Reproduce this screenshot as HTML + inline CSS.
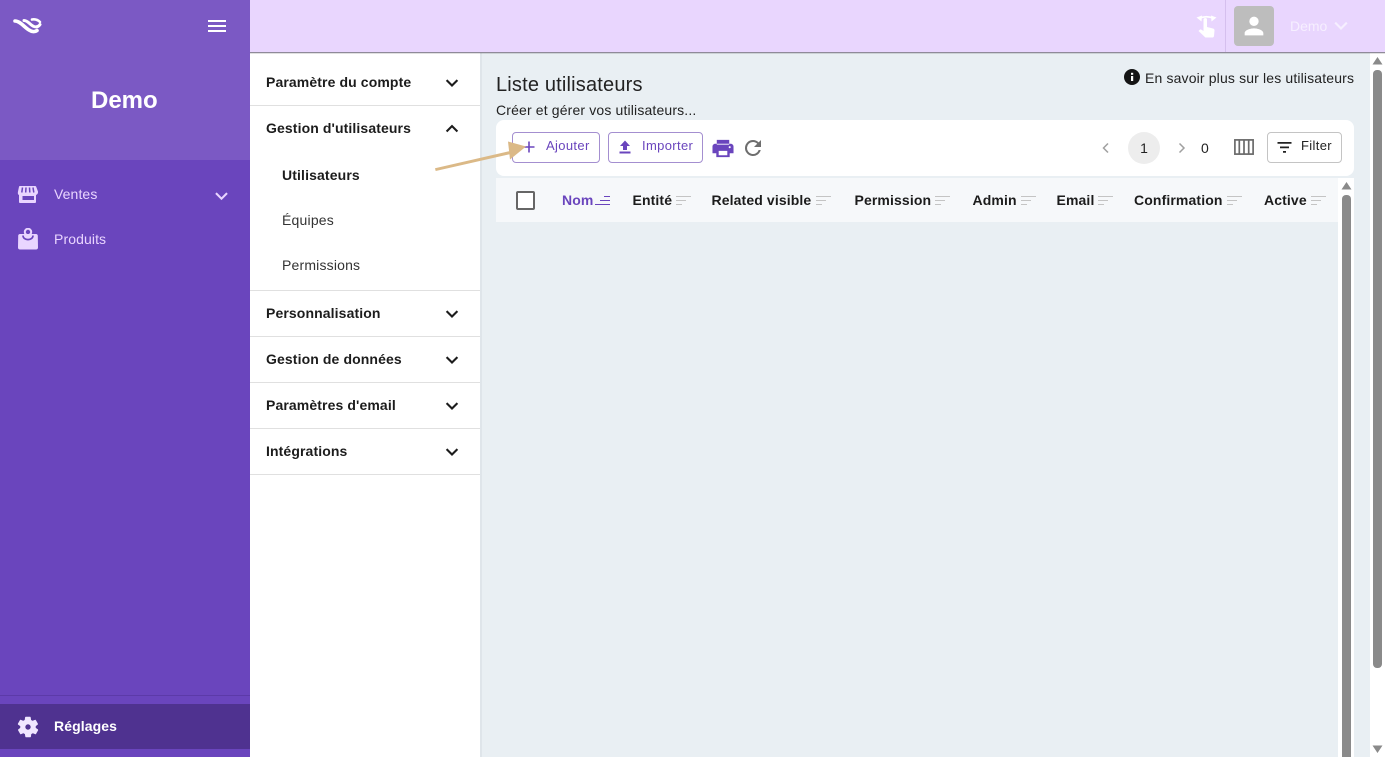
<!DOCTYPE html>
<html><head><meta charset="utf-8">
<style>
html,body{margin:0;padding:0;width:1385px;height:757px;overflow:hidden;background:#fff;font-family:"Liberation Sans",sans-serif;color:#1a1a1a}
.a{position:absolute}
.t{position:absolute;white-space:nowrap;line-height:18px}
svg{position:absolute;display:block}
.m{font-weight:700;font-size:14px;letter-spacing:.11px;left:266px;color:#1c1c1c}
.h{font-weight:700;font-size:14px;letter-spacing:.12px;top:191px;color:#1c1c1c}
.line{position:absolute;left:250px;width:230px;height:1px;background:#e0e0e0}
.b{font-size:13px;letter-spacing:.35px}
</style></head><body>
<!-- sidebar -->
<div class="a" style="left:0;top:0;width:250px;height:757px;background:#6a45bd"></div>
<div class="a" style="left:0;top:0;width:250px;height:160px;background:#7b59c4"></div>
<div class="a" style="left:0;top:695px;width:250px;height:1px;background:#5c3aa8"></div>
<div class="a" style="left:0;top:704px;width:250px;height:45px;background:#4f3290"></div>
<svg style="left:0;top:0" width="60" height="50" viewBox="0 0 60 50" fill="none" stroke="#fff" stroke-linecap="round"><path d="M15 21C20 21 24 27 29 30C32 32 35 32 37 30.500" stroke-width="3.600"/><path d="M24 20.500C28 20.500 30 25 34 26.500C37 27.500 39 26 40 24.500" stroke-width="3"/><path d="M32 19.500C35 19 38 20 40 22" stroke-width="2.600"/></svg>
<div class="a" style="left:208px;top:20px;width:18px;height:2px;background:#fff"></div>
<div class="a" style="left:208px;top:25px;width:18px;height:2px;background:#fff"></div>
<div class="a" style="left:208px;top:30px;width:18px;height:2px;background:#fff"></div>
<div class="t" style="left:91px;top:86px;line-height:30px;font-size:24px;font-weight:700;color:#fff">Demo</div>
<svg style="left:16px;top:183px" width="24" height="24" viewBox="0 0 24 24"><path fill="#e9d5ff" fill-rule="evenodd" d="M4 3h15c.6 0 1 .3 1.200.8L22 8.500c.2 1.800-.6 3-2 3.500v7c0 .6-.4 1-1 1H4c-.6 0-1-.4-1-1v-7C1.600 11.500 1.800 9.800 2 8.500L3 3.800C3.100 3.300 3.500 3 4 3zM6.500 13v4H18v-4z"/><path fill="none" stroke="#6a45bd" stroke-width="1.500" d="M6.500 4.500L5.800 9.500M10 4.500l-.3 5M13.500 4.500l.3 5M17 4.500l.8 5"/></svg>
<div class="t" style="left:54px;top:185px;font-size:14px;letter-spacing:.1px;color:#e9d5ff">Ventes</div>
<svg style="left:211.500px;top:186px" width="19" height="19" viewBox="0 0 24 24" fill="none" stroke="#e9d5ff" stroke-width="2.600"><path d="M5 9l7 7 7-7"/></svg>
<svg style="left:16px;top:228px" width="24" height="24" viewBox="0 0 24 24"><circle cx="12" cy="4" r="3.200" fill="none" stroke="#e9d5ff" stroke-width="2"/><path fill="#e9d5ff" d="M4 6h16c1 0 1.800.7 1.800 1.700L22 19.500c0 1.200-.8 2-2 2H4c-1.200 0-2-.8-2-2L2.200 7.700C2.200 6.700 3 6 4 6z"/><path fill="none" stroke="#6a45bd" stroke-width="1.700" d="M7 7.500c0 5.500 10 5.500 10 0"/></svg>
<div class="t" style="left:54px;top:230px;font-size:14px;letter-spacing:.1px;color:#e9d5ff">Produits</div>
<svg style="left:16px;top:715px" width="24" height="24" viewBox="0 0 24 24" fill="#f0e6ff" stroke="#f0e6ff" stroke-width=".6"><path fill-rule="evenodd" d="M19.400 13c0-.3.100-.7.100-1s0-.7-.1-1l2.100-1.600c.2-.2.200-.4.100-.6l-2-3.500c-.1-.2-.4-.3-.6-.2l-2.500 1c-.5-.4-1.100-.7-1.700-1l-.4-2.700c0-.2-.2-.4-.5-.4h-4c-.2 0-.4.200-.5.400l-.4 2.700c-.6.300-1.200.6-1.700 1l-2.500-1c-.2-.1-.5 0-.6.200l-2 3.500c-.1.200-.1.400.1.600L4.600 11c0 .3-.1.700-.1 1s0 .7.100 1l-2.100 1.600c-.2.200-.2.400-.1.600l2 3.500c.1.200.4.300.6.200l2.500-1c.5.400 1.100.7 1.700 1l.4 2.700c0 .2.300.4.500.4h4c.2 0 .5-.2.500-.4l.4-2.700c.6-.3 1.200-.6 1.700-1l2.500 1c.2.100.5 0 .6-.2l2-3.500c.1-.2.100-.4-.1-.6zM12 15a3 3 0 1 1 0-6 3 3 0 0 1 0 6z"/></svg>
<div class="t" style="left:54px;top:717px;font-size:14px;font-weight:700;letter-spacing:.1px;color:#fff">Réglages</div>
<!-- secondary nav -->
<div class="line" style="top:105px"></div><div class="line" style="top:290px"></div><div class="line" style="top:336px"></div><div class="line" style="top:382px"></div><div class="line" style="top:428px"></div><div class="line" style="top:474px"></div>
<div class="t m" style="top:73px">Paramètre du compte</div>
<div class="t m" style="top:119px">Gestion d'utilisateurs</div>
<div class="t" style="left:282px;top:166px;font-size:14px;font-weight:700;letter-spacing:.13px;color:#1c1c1c">Utilisateurs</div>
<div class="t" style="left:282px;top:211px;font-size:14px;letter-spacing:.2px;color:#333">Équipes</div>
<div class="t" style="left:282px;top:256px;font-size:14px;letter-spacing:.18px;color:#333">Permissions</div>
<div class="t m" style="top:304px">Personnalisation</div>
<div class="t m" style="top:350px">Gestion de données</div>
<div class="t m" style="top:396px">Paramètres d'email</div>
<div class="t m" style="top:442px">Intégrations</div>
<svg style="left:442px;top:73px" width="20" height="20" viewBox="0 0 24 24" fill="none" stroke="#1c1c1c" stroke-width="2.500"><path d="M5.500 8.500L12 15l6.500-6.500"/></svg>
<svg style="left:442px;top:119px" width="20" height="20" viewBox="0 0 24 24" fill="none" stroke="#1c1c1c" stroke-width="2.500"><path d="M5.500 15L12 8.500 18.500 15"/></svg>
<svg style="left:442px;top:304px" width="20" height="20" viewBox="0 0 24 24" fill="none" stroke="#1c1c1c" stroke-width="2.500"><path d="M5.500 8.500L12 15l6.500-6.500"/></svg>
<svg style="left:442px;top:350px" width="20" height="20" viewBox="0 0 24 24" fill="none" stroke="#1c1c1c" stroke-width="2.500"><path d="M5.500 8.500L12 15l6.500-6.500"/></svg>
<svg style="left:442px;top:396px" width="20" height="20" viewBox="0 0 24 24" fill="none" stroke="#1c1c1c" stroke-width="2.500"><path d="M5.500 8.500L12 15l6.500-6.500"/></svg>
<svg style="left:442px;top:442px" width="20" height="20" viewBox="0 0 24 24" fill="none" stroke="#1c1c1c" stroke-width="2.500"><path d="M5.500 8.500L12 15l6.500-6.500"/></svg>
<!-- content -->
<div class="a" style="left:480px;top:53px;width:890px;height:704px;background:#e9eff3"></div>
<div class="a" style="left:480px;top:53px;width:2px;height:704px;background:#dfe5ea"></div>
<div class="t" style="left:496px;top:72px;line-height:26px;font-size:20px;letter-spacing:.18px;color:#222">Liste utilisateurs</div>
<div class="t" style="left:496px;top:101px;font-size:14px;letter-spacing:.15px;color:#222">Créer et gérer vos utilisateurs...</div>
<svg style="left:1124px;top:69px" width="16" height="16" viewBox="0 0 16 16"><circle cx="8" cy="8" r="8" fill="#151515"/><rect x="7" y="7" width="2.200" height="5" fill="#fff"/><rect x="7" y="3.800" width="2.200" height="2" fill="#fff"/></svg>
<div class="t" style="left:1145px;top:69px;font-size:14px;letter-spacing:.15px;color:#222">En savoir plus sur les utilisateurs</div>
<!-- toolbar -->
<div class="a" style="left:496px;top:120px;width:858px;height:56px;background:#fff;border-radius:8px"></div>
<div class="a" style="left:512px;top:132px;width:86px;height:29px;border:1px solid #a48fd0;border-radius:4px"></div>
<div class="a" style="left:608px;top:132px;width:93px;height:29px;border:1px solid #a48fd0;border-radius:4px"></div>
<svg style="left:522px;top:140px" width="14" height="14" viewBox="0 0 14 14" fill="#6a45bd"><path d="M6.200 1.500h1.600v4.700h4.700v1.600H7.800v4.700H6.200V7.800H1.500V6.200h4.700z"/></svg>
<div class="t b" style="left:546px;top:137px;color:#6a45bd">Ajouter</div>
<svg style="left:617px;top:139px" width="16" height="16" viewBox="0 0 16 16" fill="#6a45bd"><path d="M8 1.500L13 7H10v4H6V7H3zM2.500 12.500h11v2h-11z"/></svg>
<div class="t b" style="left:642px;top:137px;color:#6a45bd">Importer</div>
<svg style="left:711.500px;top:136.500px" width="22" height="23" viewBox="0 0 23 24" fill="#6a45bd"><path fill-rule="evenodd" d="M5 3h13v5H5zM3.500 7h16c1.700 0 3 1.300 3 3v7h-4v4h-14v-4h-4v-7c0-1.700 1.300-3 3-3zM7 14.500V19h9v-4.500zM18.500 9.500a1.100 1.100 0 1 0 0 2.200 1.100 1.100 0 0 0 0-2.200z"/></svg>
<svg style="left:741px;top:136px" width="24" height="24" viewBox="0 0 24 24" fill="#6e6e6e"><path d="M17.650 6.350A7.950 7.950 0 0 0 12 4a8 8 0 1 0 7.740 10h-2.080A6 6 0 1 1 12 6c1.660 0 3.140.69 4.220 1.780L13 11h7V4z"/></svg>
<svg style="left:1098px;top:140px" width="16" height="16" viewBox="0 0 16 16" fill="none" stroke="#a0a0a0" stroke-width="1.500"><path d="M10 3.500L5.500 8l4.500 4.500"/></svg>
<div class="a" style="left:1128px;top:132px;width:32px;height:32px;border-radius:50%;background:#ededed"></div>
<div class="t" style="left:1128px;top:139px;width:32px;text-align:center;font-size:14px;color:#222">1</div>
<svg style="left:1174px;top:140px" width="16" height="16" viewBox="0 0 16 16" fill="none" stroke="#a0a0a0" stroke-width="1.500"><path d="M5.500 3.500L10 8l-4.500 4.500"/></svg>
<div class="t" style="left:1201px;top:139px;font-size:14px;color:#222">0</div>
<svg style="left:1234px;top:139px" width="20" height="16" viewBox="0 0 20 16" fill="none" stroke="#6a6a6a" stroke-width="1.700"><rect x=".9" y=".9" width="18.200" height="14.200"/><path d="M5.300 1v14M10 1v14M14.700 1v14"/></svg>
<div class="a" style="left:1267px;top:132px;width:73px;height:29px;border:1px solid #c4c4c4;border-radius:4px"></div>
<svg style="left:1277px;top:141px" width="15" height="13" viewBox="0 0 15 13" fill="#222"><path d="M.5 1h14v1.700H.5zM3 5.500h9v1.700H3zM6 10h3v1.700H6z"/></svg>
<div class="t b" style="left:1301px;top:137px;color:#222">Filter</div>
<!-- table header -->
<div class="a" style="left:496px;top:178px;width:842px;height:44px;background:#f6f8fa"></div>
<div class="a" style="left:1338px;top:178px;width:16px;height:579px;background:#fff"></div>
<div class="a" style="left:516px;top:191px;width:15px;height:15px;border:2px solid #666;border-radius:2px;background:#fff"></div>
<div class="t h" style="left:562px;color:#6a45bd">Nom</div>
<div class="t h" style="left:632.500px">Entité</div>
<div class="t h" style="left:711.500px">Related visible</div>
<div class="t h" style="left:854.500px">Permission</div>
<div class="t h" style="left:972.500px">Admin</div>
<div class="t h" style="left:1056.500px">Email</div>
<div class="t h" style="left:1134px">Confirmation</div>
<div class="t h" style="left:1264px">Active</div>
<svg style="left:595px;top:196px" width="16" height="10" viewBox="0 0 16 10" fill="#6a45bd"><path d="M0 8h15v1H0zM5 4h10v1H5zM9 0h6v1H9z"/></svg>
<svg style="left:676px;top:196px" width="16" height="10" viewBox="0 0 16 10" fill="#c4c4c4"><path d="M0 0h15v1H0zM0 4h10v1H0zM0 8h6v1H0z"/></svg>
<svg style="left:816px;top:196px" width="16" height="10" viewBox="0 0 16 10" fill="#c4c4c4"><path d="M0 0h15v1H0zM0 4h10v1H0zM0 8h6v1H0z"/></svg>
<svg style="left:935px;top:196px" width="16" height="10" viewBox="0 0 16 10" fill="#c4c4c4"><path d="M0 0h15v1H0zM0 4h10v1H0zM0 8h6v1H0z"/></svg>
<svg style="left:1021px;top:196px" width="16" height="10" viewBox="0 0 16 10" fill="#c4c4c4"><path d="M0 0h15v1H0zM0 4h10v1H0zM0 8h6v1H0z"/></svg>
<svg style="left:1098px;top:196px" width="16" height="10" viewBox="0 0 16 10" fill="#c4c4c4"><path d="M0 0h15v1H0zM0 4h10v1H0zM0 8h6v1H0z"/></svg>
<svg style="left:1227px;top:196px" width="16" height="10" viewBox="0 0 16 10" fill="#c4c4c4"><path d="M0 0h15v1H0zM0 4h10v1H0zM0 8h6v1H0z"/></svg>
<svg style="left:1311px;top:196px" width="16" height="10" viewBox="0 0 16 10" fill="#c4c4c4"><path d="M0 0h15v1H0zM0 4h10v1H0zM0 8h6v1H0z"/></svg>
<!-- inner scrollbar -->
<svg style="left:1341px;top:181px" width="11" height="9" viewBox="0 0 11 9" fill="#8a8a8a"><path d="M5.500 1L10.500 8.500H.5z"/></svg>
<div class="a" style="left:1342px;top:195px;width:9px;height:562px;background:#8a8a8a;border-radius:4px 4px 0 0"></div>
<!-- outer scrollbar -->
<div class="a" style="left:1370px;top:53px;width:15px;height:704px;background:#fff"></div>
<svg style="left:1372px;top:56px" width="11" height="9" viewBox="0 0 11 9" fill="#8a8a8a"><path d="M5.500 1L10.500 8.500H.5z"/></svg>
<div class="a" style="left:1373px;top:70px;width:9px;height:598px;background:#8a8a8a;border-radius:4px"></div>
<svg style="left:1372px;top:745px" width="11" height="9" viewBox="0 0 11 9" fill="#8a8a8a"><path d="M.5 .5h10L5.500 8z"/></svg>
<!-- topbar -->
<div class="a" style="left:250px;top:0;width:1135px;height:52px;background:#e9d6fe"></div>
<div class="a" style="left:250px;top:52px;width:1135px;height:1px;background:#8f8a99"></div>
<div class="a" style="left:250px;top:53px;width:1135px;height:1px;background:rgba(0,0,0,.12)"></div>
<div class="a" style="left:1225px;top:0;width:1px;height:52px;background:#d5bfee"></div>
<svg style="left:1194px;top:13px" width="24" height="26" viewBox="0 0 24 26" fill="#fff"><path d="M5 5.500Q12.500 2 20 5.500" fill="none" stroke="#fff" stroke-width="1.800"/><path d="M2.500 4.500L8 2.500 7.500 8.500zM22.500 4.500L17 2.500 17.500 8.500z"/><path d="M9.500 6.500c0-1 .7-1.500 1.800-1.500s1.700.5 1.700 1.500v7.500l6 1.500c1 .3 1.500 1 1.500 2l-.5 5.500c-.1 1-.8 1.500-1.500 1.500H12c-.6 0-1-.2-1.300-.6L4.500 18l1.300-1.300c.4-.4 1-.5 1.500-.1l2.200 1.400z"/></svg>
<div class="a" style="left:1234px;top:6px;width:40px;height:40px;background:#bdbdbd;border-radius:4px"></div>
<svg style="left:1240px;top:12px" width="28" height="28" viewBox="0 0 24 24" fill="#fff"><path d="M12 12a4 4 0 1 0 0-8 4 4 0 0 0 0 8zm0 2c-2.700 0-8 1.300-8 4v2h16v-2c0-2.700-5.300-4-8-4z"/></svg>
<div class="t" style="left:1290px;top:17px;font-size:14px;color:#f6efff">Demo</div>
<svg style="left:1331px;top:16px" width="20" height="20" viewBox="0 0 24 24" fill="none" stroke="#f6efff" stroke-width="2.600"><path d="M5 8l7 7 7-7"/></svg>
<!-- arrow -->
<svg style="left:430px;top:135px" width="100" height="40" viewBox="0 0 100 40" fill="#dbb987"><path d="M5 33.200L80 16l.8 3L5.700 36z"/><path d="M78 6.500L96 11.500 80 24.500z"/></svg>
</body></html>
